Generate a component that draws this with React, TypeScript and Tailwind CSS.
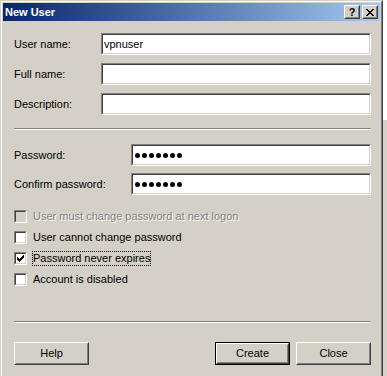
import React from 'react';

// Windows 2000 style "New User" dialog
const font = "font-['Liberation_Sans',Arial,sans-serif]";

function Field({ children }: { children?: React.ReactNode }) {
  return (
    <div className="flex-1 flex h-[22px] border border-t-[#808080] border-l-[#808080] border-b-white border-r-white">
      <div className="flex-1 flex items-center bg-white border border-t-[#404040] border-l-[#404040] border-b-[#d4d0c8] border-r-[#d4d0c8] pl-[1px] text-[11px] text-black">
        {children}
      </div>
    </div>
  );
}

function Dots() {
  return (
    <div className="flex gap-[2px] pl-[1px]">
      {Array.from({ length: 7 }).map((_, i) => (
        <span key={i} className="w-[5px] h-[5px] rounded-full bg-black" />
      ))}
    </div>
  );
}

const checkPixels = [
  '......x',
  '.....xx',
  'x...xxx',
  'xx.xxx.',
  'xxxxx..',
  '.xxx...',
  '..x....',
];

function Check({ color }: { color: string }) {
  return (
    <svg width="7" height="7" viewBox="0 0 7 7" shapeRendering="crispEdges">
      {checkPixels.flatMap((row, y) =>
        row.split('').map((c, x) => (c === 'x' ? <rect key={`${x}-${y}`} x={x} y={y} width="1" height="1" fill={color} /> : null))
      )}
    </svg>
  );
}

function CheckRow({ label, checked, disabled, focus }: { label: string; checked?: boolean; disabled?: boolean; focus?: boolean }) {
  return (
    <div className="flex items-center h-[21px]">
      <div className="w-[13px] h-[13px] flex border border-t-[#808080] border-l-[#808080] border-b-white border-r-white">
        <div
          className={`flex-1 flex items-center justify-center border border-t-[#404040] border-l-[#404040] border-b-[#d4d0c8] border-r-[#d4d0c8] ${
            disabled ? 'bg-[#d4d0c8]' : 'bg-white'
          }`}
        >
          {checked && <Check color="#000" />}
        </div>
      </div>
      <span
        className={`ml-[5px] px-0 leading-[13px] border border-dotted ${focus ? 'border-black' : 'border-transparent'} ${
          disabled ? 'text-[#808080] [text-shadow:1px_1px_0_#fff]' : 'text-black'
        }`}
      >
        {label}
      </span>
    </div>
  );
}

function Button({ label, def }: { label: string; def?: boolean }) {
  const inner = (
    <div className="flex-1 flex border border-t-white border-l-white border-b-[#404040] border-r-[#404040]">
      <div className="flex-1 flex items-center justify-center border border-t-[#d4d0c8] border-l-[#d4d0c8] border-b-[#808080] border-r-[#808080] text-black">
        {label}
      </div>
    </div>
  );
  return (
    <div className={`w-[75px] h-[23px] flex ${def ? 'border border-black' : ''}`}>{inner}</div>
  );
}

function Separator() {
  return (
    <div className="flex flex-col">
      <div className="h-px bg-[#808080]" />
      <div className="h-px bg-white" />
    </div>
  );
}

function TitleButton({ children }: { children: React.ReactNode }) {
  return (
    <div className="w-[16px] h-[14px] flex bg-[#d4d0c8] border border-t-white border-l-white border-b-[#404040] border-r-[#404040]">
      <div className="flex-1 flex items-center justify-center border border-t-[#d4d0c8] border-l-[#d4d0c8] border-b-[#808080] border-r-[#808080]">
        {children}
      </div>
    </div>
  );
}

export default function App() {
  return (
    <div className={`flex w-[387px] h-[376px] overflow-hidden ${font} text-[11px]`}>
      <div className="w-[383px] h-[376px] shrink-0 flex border-l border-t border-r border-l-[#d4d0c8] border-t-[#d4d0c8] border-r-[#404040]">
        <div className="flex-1 flex flex-col bg-[#d4d0c8] border-l border-t border-r border-l-white border-t-white border-r-[#808080]">
          {/* title bar */}
          <div className="mx-px mt-px h-[18px] flex items-center justify-between pl-[2px] pr-[2px] bg-gradient-to-r from-[#0a246a] to-[#a6caf0]">
            <span className="text-white font-bold text-[11px] leading-none">New User</span>
            <div className="flex gap-[2px]">
              <TitleButton>
                <span className="text-black font-bold text-[11px] leading-none">?</span>
              </TitleButton>
              <TitleButton>
                <svg width="8" height="7" viewBox="0 0 8 7" shapeRendering="crispEdges">
                  <path d="M0 0h2l2 2.5L6 0h2L5 3.5 8 7H6L4 4.5 2 7H0l3-3.5z" fill="#000" />
                </svg>
              </TitleButton>
            </div>
          </div>

          <div className="flex flex-col pl-[12px] pr-[10px]">
            <div className="mt-[12px] flex items-center">
              <span className="w-[87px]">User name:</span>
              <Field>vpnuser</Field>
            </div>
            <div className="mt-[8px] flex items-center">
              <span className="w-[87px]">Full name:</span>
              <Field />
            </div>
            <div className="mt-[8px] flex items-center">
              <span className="w-[87px]">Description:</span>
              <Field />
            </div>

            <div className="mt-[13px]">
              <Separator />
            </div>

            <div className="mt-[14px] flex items-center">
              <span className="w-[117px]">Password:</span>
              <Field>
                <Dots />
              </Field>
            </div>
            <div className="mt-[7px] flex items-center">
              <span className="w-[117px]">Confirm password:</span>
              <Field>
                <Dots />
              </Field>
            </div>

            <div className="mt-[11px] flex flex-col">
              <CheckRow label="User must change password at next logon" disabled />
              <CheckRow label="User cannot change password" />
              <CheckRow label="Password never expires" checked focus />
              <CheckRow label="Account is disabled" />
            </div>

            <div className="mt-[31px]">
              <Separator />
            </div>

            <div className="mt-[19px] flex items-center">
              <Button label="Help" />
              <div className="flex-1" />
              <Button label="Create" def />
              <div className="w-[6px]" />
              <Button label="Close" />
            </div>
          </div>
        </div>
      </div>
      <div className="flex-1 flex flex-col">
        <div className="h-[120px] bg-white" />
        <div className="flex-1 bg-[#d4d0c8]" />
      </div>
    </div>
  );
}
